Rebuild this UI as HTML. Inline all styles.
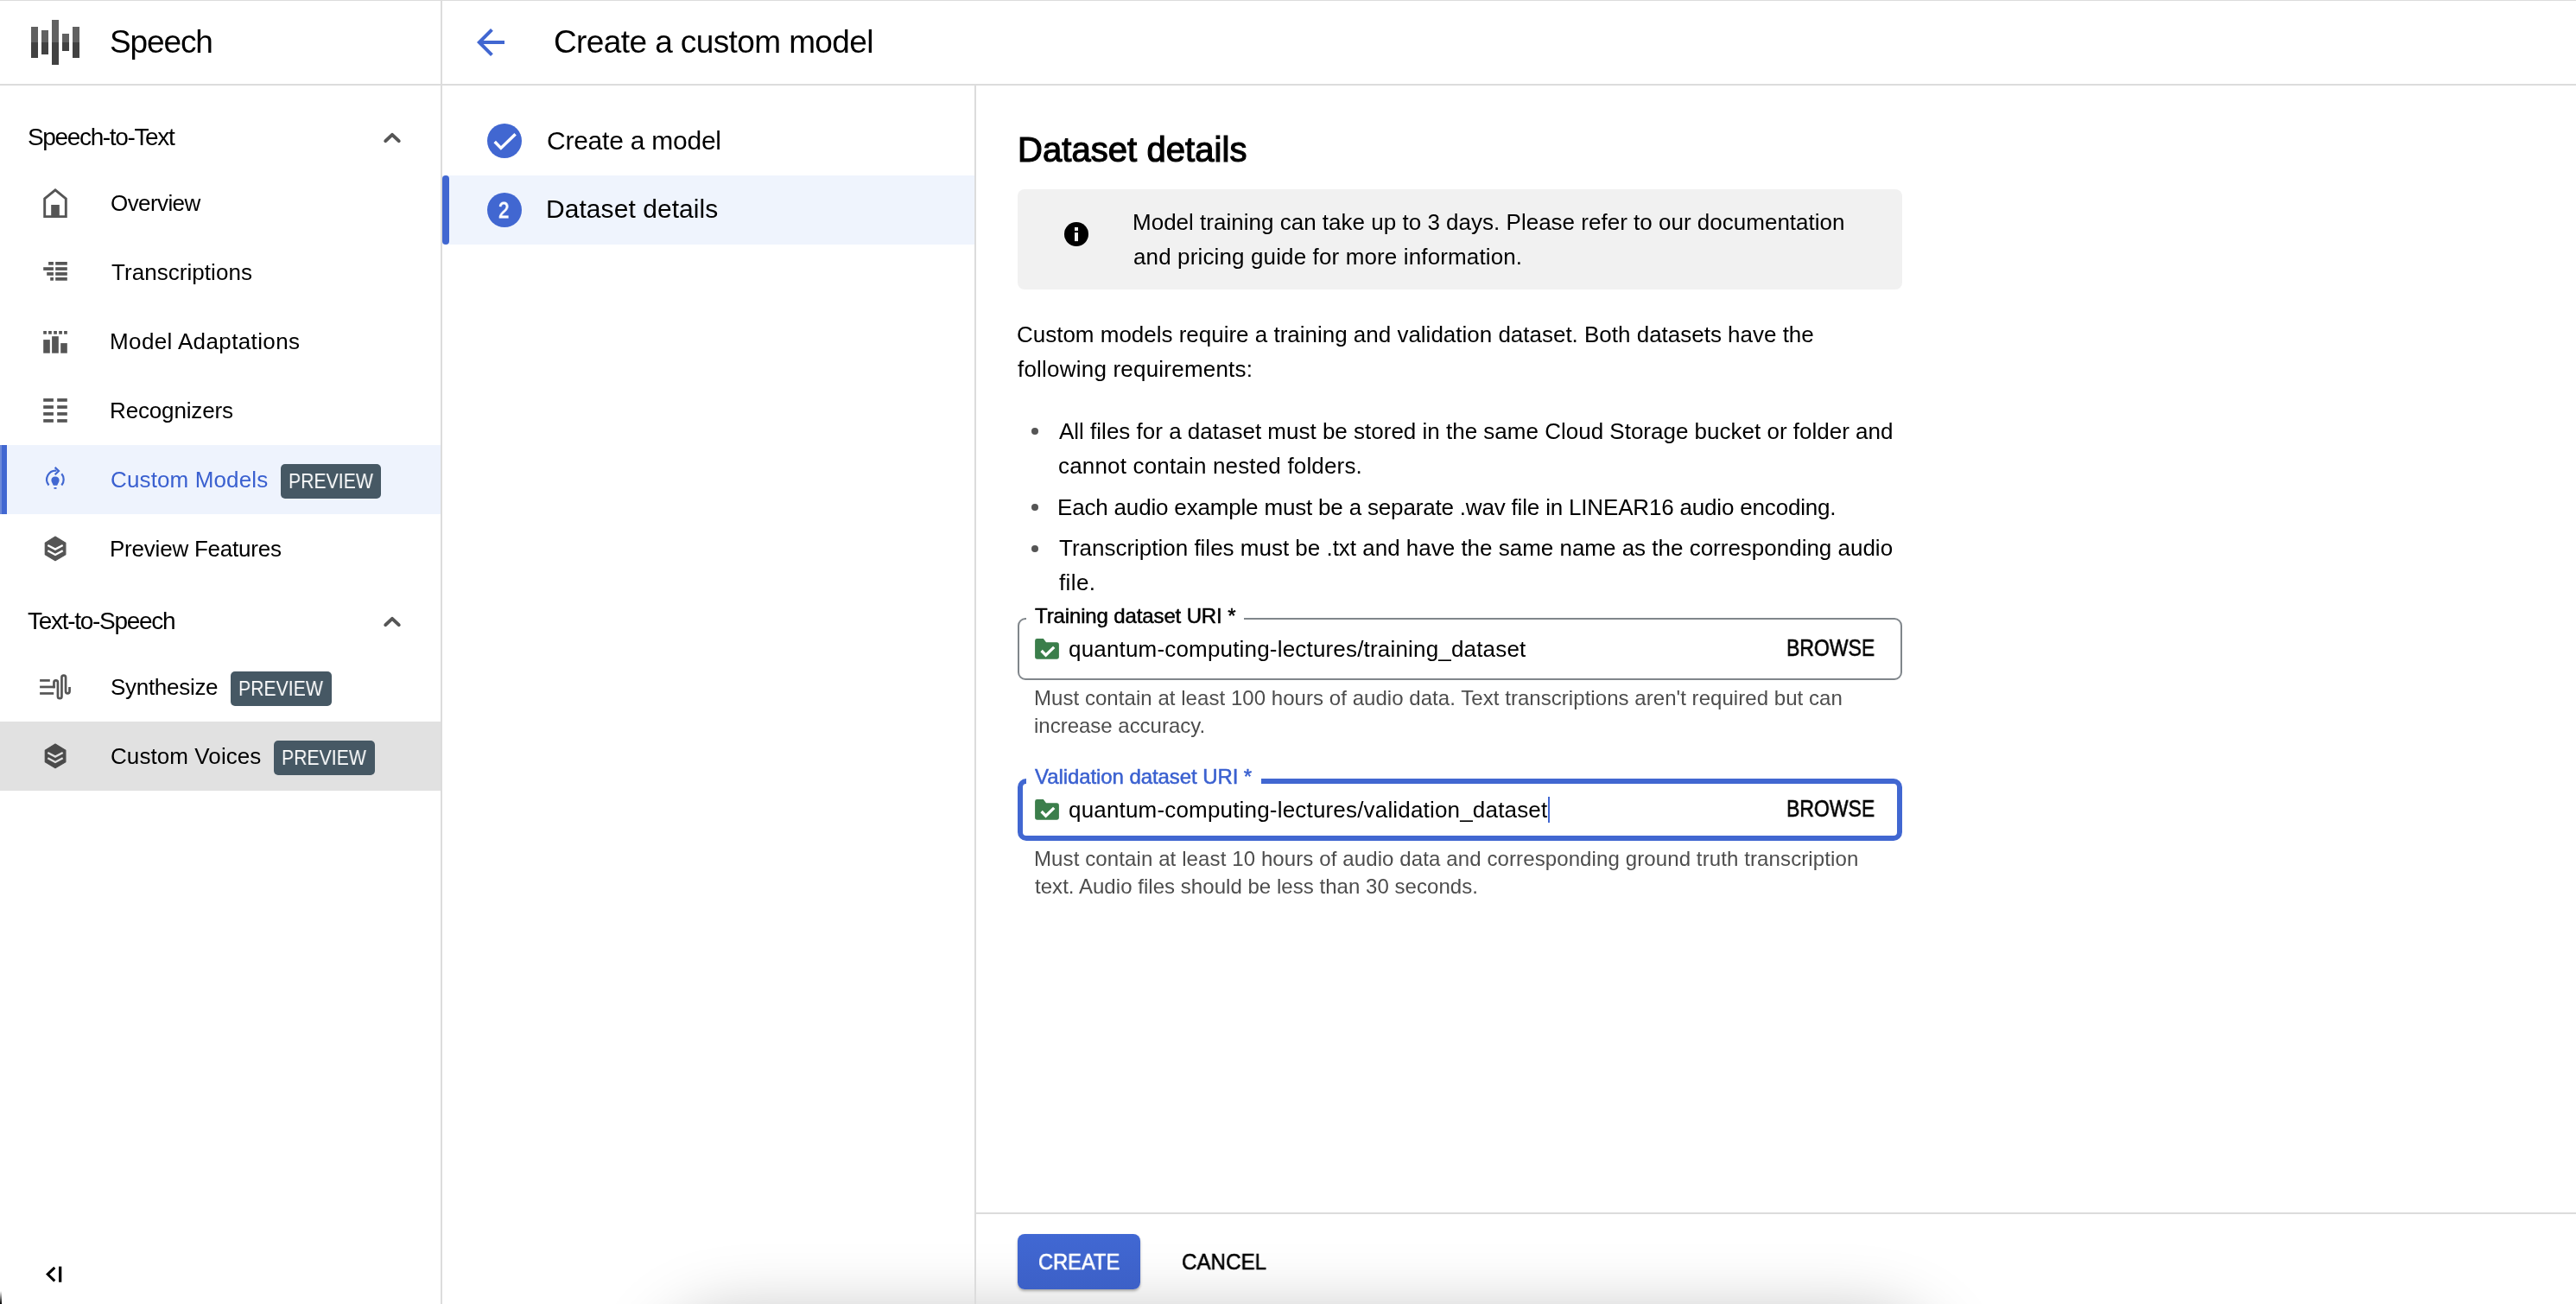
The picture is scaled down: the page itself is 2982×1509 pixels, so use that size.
<!DOCTYPE html>
<html><head><meta charset="utf-8"><style>
html,body{margin:0;padding:0;background:#fff;}
body{width:2982px;height:1509px;position:relative;overflow:hidden;font-family:"Liberation Sans",sans-serif;}
.t{position:absolute;white-space:pre;will-change:transform;}
.r{position:absolute;}
</style></head><body>
<div class="r" style="left:0px;top:0px;width:2982px;height:1px;background:#dcdcdc;"></div>
<div class="r" style="left:0px;top:97px;width:2982px;height:2px;background:#dcdcdc;"></div>
<div class="r" style="left:510px;top:0px;width:2px;height:1509px;background:#dcdcdc;"></div>
<div class="r" style="left:1128px;top:99px;width:2px;height:1410px;background:#dcdcdc;"></div>
<div class="r" style="left:1130px;top:1403px;width:1852px;height:2px;background:#dcdcdc;"></div>
<div class="r" style="left:36px;top:31px;width:8px;height:18px;background:#616161;"></div>
<div class="r" style="left:36px;top:49px;width:8px;height:18px;background:#424242;"></div>
<div class="r" style="left:48px;top:35px;width:8px;height:14px;background:#616161;"></div>
<div class="r" style="left:48px;top:49px;width:8px;height:14px;background:#424242;"></div>
<div class="r" style="left:60px;top:23px;width:8px;height:26px;background:#616161;"></div>
<div class="r" style="left:60px;top:49px;width:8px;height:26px;background:#424242;"></div>
<div class="r" style="left:72px;top:39px;width:8px;height:10px;background:#616161;"></div>
<div class="r" style="left:72px;top:49px;width:8px;height:10px;background:#424242;"></div>
<div class="r" style="left:84px;top:31px;width:8px;height:18px;background:#616161;"></div>
<div class="r" style="left:84px;top:49px;width:8px;height:18px;background:#424242;"></div>
<div class="t" id="t0" style="left:126.60px;top:30.17px;font-size:37px;line-height:37px;letter-spacing:-1.12px;color:#000;">Speech</div>
<svg class="r" style="left:544px;top:25px" width="48" height="48" viewBox="0 0 24 24"><path fill="#4167d1" d="M20 11H7.83l5.59-5.59L12 4l-8 8 8 8 1.41-1.41L7.83 13H20v-2z"/></svg>
<div class="t" id="t1" style="left:640.50px;top:29.87px;font-size:37px;line-height:37px;letter-spacing:-0.60px;color:#000;">Create a custom model</div>
<div class="t" id="t2" style="left:31.60px;top:144.59px;font-size:28px;line-height:28px;letter-spacing:-1.35px;color:#000;">Speech-to-Text</div>
<svg class="r" style="left:434px;top:135.5px" width="40" height="40"><polyline points="12.3,27.1 20,19.9 27.7,27.1" fill="none" stroke="#555555" stroke-width="4" stroke-linecap="round" stroke-linejoin="round"/></svg>
<svg class="r" style="left:434px;top:695.5px" width="40" height="40"><polyline points="12.3,27.1 20,19.9 27.7,27.1" fill="none" stroke="#555555" stroke-width="4" stroke-linecap="round" stroke-linejoin="round"/></svg>
<div class="r" style="left:0px;top:515px;width:510px;height:80px;background:#eef3fd;"></div>
<div class="r" style="left:0px;top:515px;width:8px;height:80px;background:#4167d1;"></div>
<div class="r" style="left:0px;top:515px;width:2px;height:80px;background:#6c89d9;"></div>
<div class="r" style="left:0px;top:835px;width:510px;height:80px;background:#e1e1e1;"></div>
<div class="t" id="t3" style="left:127.70px;top:222.39px;font-size:26px;line-height:26px;letter-spacing:-0.59px;color:#000;">Overview</div>
<div class="t" id="t4" style="left:128.70px;top:301.99px;font-size:26px;line-height:26px;letter-spacing:0.05px;color:#000;">Transcriptions</div>
<div class="t" id="t5" style="left:126.70px;top:382.49px;font-size:26px;line-height:26px;letter-spacing:0.38px;color:#000;">Model Adaptations</div>
<div class="t" id="t6" style="left:126.70px;top:461.99px;font-size:26px;line-height:26px;letter-spacing:-0.15px;color:#000;">Recognizers</div>
<div class="t" id="t7" style="left:127.70px;top:541.99px;font-size:26px;line-height:26px;letter-spacing:0.13px;color:#3a60d0;">Custom Models</div>
<div class="t" id="t8" style="left:126.70px;top:621.99px;font-size:26px;line-height:26px;letter-spacing:-0.22px;color:#000;">Preview Features</div>
<div class="t" id="t9" style="left:32.20px;top:704.99px;font-size:28px;line-height:28px;letter-spacing:-1.29px;color:#000;">Text-to-Speech</div>
<div class="t" id="t10" style="left:127.70px;top:781.99px;font-size:26px;line-height:26px;letter-spacing:-0.29px;color:#000;">Synthesize</div>
<div class="t" id="t11" style="left:127.70px;top:861.99px;font-size:26px;line-height:26px;letter-spacing:0.08px;color:#000;">Custom Voices</div>
<div class="r" style="left:325px;top:537px;width:116px;height:40px;background:#465864;border-radius:5px;"></div>
<div class="t" id="t12" style="left:334.00px;top:544.98px;font-size:24px;line-height:24px;color:#fff;transform:scaleX(0.8845760000000001);transform-origin:0 0;">PREVIEW</div>
<div class="r" style="left:267px;top:777px;width:117px;height:40px;background:#465864;border-radius:5px;"></div>
<div class="t" id="t13" style="left:276.00px;top:784.98px;font-size:24px;line-height:24px;color:#fff;transform:scaleX(0.8845760000000001);transform-origin:0 0;">PREVIEW</div>
<div class="r" style="left:317px;top:857px;width:117px;height:40px;background:#465864;border-radius:5px;"></div>
<div class="t" id="t14" style="left:326.00px;top:864.98px;font-size:24px;line-height:24px;color:#fff;transform:scaleX(0.8845760000000001);transform-origin:0 0;">PREVIEW</div>
<svg class="r" style="left:40px;top:210px" width="50" height="50"><path d="M11.7 19.9 L24 9.9 L36.3 19.9 V40.6 H11.7 Z" fill="none" stroke="#555555" stroke-width="2.9" stroke-linejoin="miter"/><rect x="19.2" y="27" width="9.6" height="13" fill="#555555"/></svg>
<svg class="r" style="left:40px;top:290px" width="50" height="50" fill="#555555"><rect x="16.1" y="13" width="5.799999999999997" height="3.7"/><rect x="24.2" y="13" width="13.6" height="3.7"/><rect x="10.2" y="19.2" width="11.7" height="3.7"/><rect x="24.2" y="19.2" width="13.6" height="3.7"/><rect x="14.2" y="25.1" width="7.699999999999999" height="3.7"/><rect x="24.2" y="25.1" width="13.6" height="3.7"/><rect x="18.2" y="31" width="3.6999999999999993" height="3.7"/><rect x="24.2" y="31" width="13.6" height="3.7"/></svg>
<svg class="r" style="left:40px;top:370px" width="50" height="50" fill="#555555"><rect x="10.2" y="13" width="3.7" height="3.7"/><rect x="16.1" y="13" width="3.7" height="3.7"/><rect x="22.2" y="13" width="3.7" height="3.7"/><rect x="28.2" y="13" width="3.7" height="3.7"/><rect x="34.1" y="13" width="3.7" height="3.7"/><rect x="10.2" y="23.1" width="7.6" height="15.6"/><rect x="20.1" y="19.2" width="7.7" height="19.5"/><rect x="30.2" y="27.1" width="7.6" height="11.6"/></svg>
<svg class="r" style="left:40px;top:450px" width="50" height="50" fill="#555555"><rect x="10.2" y="11.1" width="11.7" height="3.7"/><rect x="26.2" y="11.1" width="11.6" height="3.7"/><rect x="10.2" y="19.2" width="11.7" height="3.7"/><rect x="26.2" y="19.2" width="11.6" height="3.7"/><rect x="10.2" y="27.1" width="11.7" height="3.7"/><rect x="26.2" y="27.1" width="11.6" height="3.7"/><rect x="10.2" y="35.1" width="11.7" height="3.7"/><rect x="26.2" y="35.1" width="11.6" height="3.7"/></svg>
<svg class="r" style="left:40px;top:528px" width="50" height="50">
<path d="M16.5 33.5 A10.3 10.3 0 0 1 25.5 16.7" fill="none" stroke="#4167d1" stroke-width="2.2"/>
<polyline points="23.6,12.9 28,17 23.6,21.2" fill="none" stroke="#4167d1" stroke-width="2.2"/>
<path d="M31.3 20.3 A10.3 10.3 0 0 1 31.3 33.5" fill="none" stroke="#4167d1" stroke-width="2.2"/>
<path d="M24 23.4 C27 23.4 28.6 25.3 28.6 27.7 C28.6 29.8 27.2 31 26.2 33.7 H21.8 C20.8 31 19.4 29.8 19.4 27.7 C19.4 25.3 21 23.4 24 23.4 Z" fill="#4167d1"/>
<rect x="22.5" y="36" width="3" height="1.8" fill="#4167d1"/>
</svg>
<svg class="r" style="left:40px;top:610px" width="50" height="50">
<path d="M24 11.1 L35.9 18.2 V31.8 L24 38.7 L12.3 31.8 V18.2 Z" fill="#555555" stroke="#555555" stroke-width="1.2" stroke-linejoin="round"/>
<polyline points="15.3,21 24,25.6 32.7,21" fill="none" stroke="#ffffff" stroke-width="2.4"/>
<polyline points="15.3,27.3 24,32 32.7,27.3" fill="none" stroke="#ffffff" stroke-width="2.4"/>
</svg>
<svg class="r" style="left:40px;top:850px" width="50" height="50">
<path d="M24 11.1 L35.9 18.2 V31.8 L24 38.7 L12.3 31.8 V18.2 Z" fill="#4b4b4b" stroke="#4b4b4b" stroke-width="1.2" stroke-linejoin="round"/>
<polyline points="15.3,21 24,25.6 32.7,21" fill="none" stroke="#e1e1e1" stroke-width="2.4"/>
<polyline points="15.3,27.3 24,32 32.7,27.3" fill="none" stroke="#e1e1e1" stroke-width="2.4"/>
</svg>
<svg class="r" style="left:40px;top:770px" width="50" height="50">
<g fill="#555555"><rect x="6.1" y="16.1" width="11.7" height="2.7"/><rect x="6.1" y="23.6" width="17.6" height="2.7"/><rect x="6.1" y="31.1" width="16.1" height="2.7"/></g>
<path d="M22.45 26.3 V19.7 A2.25 2.25 0 0 1 26.95 19.7 V35.9 A2.25 2.25 0 0 0 31.45 35.9 V13.85 A2.3 2.3 0 0 1 36.05 13.85 V30.1 A2.25 2.25 0 0 0 40.55 30.1 V25.1" fill="none" stroke="#555555" stroke-width="2.7"/>
</svg>
<svg class="r" style="left:40px;top:1455px" width="40" height="40"><polyline points="23.3,11.9 15.2,19.6 23.3,27.4" fill="none" stroke="#000" stroke-width="3"/><rect x="28" y="10.6" width="3.3" height="18.1" fill="#000"/></svg>
<div class="r" style="left:512px;top:203px;width:616px;height:80px;background:#eff4fd;"></div>
<div class="r" style="left:512px;top:203px;width:8px;height:80px;background:#4167d1;border-radius:4px;"></div>
<svg class="r" style="left:564px;top:143px" width="40" height="40"><circle cx="20" cy="20" r="20" fill="#4167d1"/><polyline points="8.7,21 15.9,28.4 32.6,12.2" fill="none" stroke="#fff" stroke-width="3.5"/></svg>
<svg class="r" style="left:564px;top:223px" width="40" height="40"><circle cx="20" cy="20" r="20" fill="#4167d1"/></svg>
<div class="t" id="t15" style="left:577.00px;top:231.03px;font-size:25px;line-height:25px;color:#fff;-webkit-text-stroke:0.9px #fff;transform:scaleX(0.886871);transform-origin:0 0;">2</div>
<div class="t" id="t16" style="left:632.50px;top:147.50px;font-size:30px;line-height:30px;letter-spacing:-0.24px;color:#000;">Create a model</div>
<div class="t" id="t17" style="left:631.50px;top:227.40px;font-size:30px;line-height:30px;letter-spacing:0.06px;color:#000;">Dataset details</div>
<div class="t" id="t18" style="left:1178.00px;top:152.73px;font-size:40px;line-height:40px;letter-spacing:0.06px;color:#000;-webkit-text-stroke:1.2px #000;">Dataset details</div>
<div class="r" style="left:1178px;top:219px;width:1024px;height:116px;background:#f1f1f1;border-radius:8px;"></div>
<svg class="r" style="left:1226px;top:251px" width="40" height="40"><circle cx="20" cy="20" r="14" fill="#000"/><rect x="18" y="12" width="4" height="4" fill="#f1f1f1"/><rect x="18" y="18.1" width="4" height="10" fill="#f1f1f1"/></svg>
<div class="t" id="t19" style="left:1310.80px;top:243.99px;font-size:26px;line-height:26px;letter-spacing:0.01px;color:#000;">Model training can take up to 3 days. Please refer to our documentation</div>
<div class="t" id="t20" style="left:1311.80px;top:283.99px;font-size:26px;line-height:26px;letter-spacing:0.13px;color:#000;">and pricing guide for more information.</div>
<div class="t" id="t21" style="left:1176.70px;top:373.79px;font-size:26px;line-height:26px;letter-spacing:-0.01px;color:#000;">Custom models require a training and validation dataset. Both datasets have the</div>
<div class="t" id="t22" style="left:1177.70px;top:413.79px;font-size:26px;line-height:26px;letter-spacing:0.21px;color:#000;">following requirements:</div>
<div class="r" style="left:1194px;top:495px;width:8px;height:8px;border-radius:50%;background:#555"></div>
<div class="r" style="left:1194px;top:583.2px;width:8px;height:8px;border-radius:50%;background:#555"></div>
<div class="r" style="left:1194px;top:630.6px;width:8px;height:8px;border-radius:50%;background:#555"></div>
<div class="t" id="t23" style="left:1225.50px;top:485.79px;font-size:26px;line-height:26px;letter-spacing:-0.00px;color:#000;">All files for a dataset must be stored in the same Cloud Storage bucket or folder and</div>
<div class="t" id="t24" style="left:1224.50px;top:525.79px;font-size:26px;line-height:26px;letter-spacing:0.17px;color:#000;">cannot contain nested folders.</div>
<div class="t" id="t25" style="left:1223.50px;top:573.79px;font-size:26px;line-height:26px;letter-spacing:-0.18px;color:#000;">Each audio example must be a separate .wav file in LINEAR16 audio encoding.</div>
<div class="t" id="t26" style="left:1225.50px;top:621.39px;font-size:26px;line-height:26px;letter-spacing:-0.01px;color:#000;">Transcription files must be .txt and have the same name as the corresponding audio</div>
<div class="t" id="t27" style="left:1225.50px;top:661.39px;font-size:26px;line-height:26px;letter-spacing:0.38px;color:#000;">file.</div>
<div class="r" style="left:1178px;top:715px;width:1024px;height:72px;box-sizing:border-box;border:2px solid #80868b;border-radius:9px;"></div>
<div class="r" style="left:1188px;top:713px;width:252px;height:6px;background:#fff;"></div>
<div class="t" id="t28" style="left:1198.30px;top:701.48px;font-size:24px;line-height:24px;letter-spacing:-0.13px;color:#000;-webkit-text-stroke:0.5px #000;">Training dataset URI *</div>
<svg class="r" style="left:1190px;top:730px" width="50" height="40"><path d="M10.5 9 H17.8 L21 13.2 H33.2 A2.7 2.7 0 0 1 35.9 15.9 V30.1 A2.7 2.7 0 0 1 33.2 32.8 H10.8 A2.7 2.7 0 0 1 8.1 30.1 V11.4 A2.4 2.4 0 0 1 10.5 9 Z" fill="#3b7e4b"/><polyline points="15.6,23 20.6,28.2 30.2,18.9" fill="none" stroke="#fff" stroke-width="3.3"/></svg>
<div class="t" id="t29" style="left:1237.40px;top:737.99px;font-size:26px;line-height:26px;letter-spacing:0.18px;color:#000;">quantum-computing-lectures/training_dataset</div>
<div class="t" id="t30" style="left:2067.50px;top:737.14px;font-size:27px;line-height:27px;color:#000;-webkit-text-stroke:0.6px #000;transform:scaleX(0.8516579999999999);transform-origin:0 0;">BROWSE</div>
<div class="t" id="t31" style="left:1196.50px;top:796.28px;font-size:24px;line-height:24px;letter-spacing:0.05px;color:#4d4d4d;">Must contain at least 100 hours of audio data. Text transcriptions aren't required but can</div>
<div class="t" id="t32" style="left:1196.50px;top:828.28px;font-size:24px;line-height:24px;letter-spacing:-0.01px;color:#4d4d4d;">increase accuracy.</div>
<div class="r" style="left:1178px;top:901px;width:1024px;height:72px;box-sizing:border-box;border:6px solid #4167d1;border-radius:10px;"></div>
<div class="r" style="left:1188px;top:898px;width:272px;height:12px;background:#fff;"></div>
<div class="t" id="t33" style="left:1197.80px;top:887.28px;font-size:24px;line-height:24px;letter-spacing:-0.08px;color:#3a60d0;-webkit-text-stroke:0.5px #3a60d0;">Validation dataset URI *</div>
<svg class="r" style="left:1190px;top:916px" width="50" height="40"><path d="M10.5 9 H17.8 L21 13.2 H33.2 A2.7 2.7 0 0 1 35.9 15.9 V30.1 A2.7 2.7 0 0 1 33.2 32.8 H10.8 A2.7 2.7 0 0 1 8.1 30.1 V11.4 A2.4 2.4 0 0 1 10.5 9 Z" fill="#3b7e4b"/><polyline points="15.6,23 20.6,28.2 30.2,18.9" fill="none" stroke="#fff" stroke-width="3.3"/></svg>
<div class="t" id="t34" style="left:1237.40px;top:923.99px;font-size:26px;line-height:26px;letter-spacing:0.18px;color:#000;">quantum-computing-lectures/validation_dataset</div>
<div class="r" style="left:1792px;top:922px;width:2px;height:30px;background:#4167d1;"></div>
<div class="t" id="t35" style="left:2067.50px;top:923.14px;font-size:27px;line-height:27px;color:#000;-webkit-text-stroke:0.6px #000;transform:scaleX(0.8516579999999999);transform-origin:0 0;">BROWSE</div>
<div class="t" id="t36" style="left:1196.50px;top:982.48px;font-size:24px;line-height:24px;letter-spacing:0.11px;color:#4d4d4d;">Must contain at least 10 hours of audio data and corresponding ground truth transcription</div>
<div class="t" id="t37" style="left:1197.50px;top:1014.48px;font-size:24px;line-height:24px;letter-spacing:0.04px;color:#4d4d4d;">text. Audio files should be less than 30 seconds.</div>
<div class="r" style="left:0;top:1494px;width:2px;height:15px;background:linear-gradient(rgba(0,0,0,0),#000);"></div>
<div class="r" style="left:760px;top:1522px;width:1487px;height:200px;border-radius:90px;box-shadow:0 0 80px 0 rgba(0,0,0,0.26);"></div>
<div class="r" style="left:1128px;top:1403px;width:2px;height:106px;background:#dcdcdc;"></div>
<div class="r" style="left:1178px;top:1428px;width:142px;height:64px;border-radius:8px;background:linear-gradient(#4168d3,#3c60c7);box-shadow:0 2px 3px rgba(0,0,0,0.3);"></div>
<div class="t" id="t38" style="left:1201.50px;top:1447.09px;font-size:26px;line-height:26px;color:#fff;-webkit-text-stroke:0.6px #fff;transform:scaleX(0.9098099999999999);transform-origin:0 0;">CREATE</div>
<div class="t" id="t39" style="left:1368.00px;top:1447.09px;font-size:26px;line-height:26px;color:#000;-webkit-text-stroke:0.6px #000;transform:scaleX(0.9295680000000001);transform-origin:0 0;">CANCEL</div>
</body></html>
